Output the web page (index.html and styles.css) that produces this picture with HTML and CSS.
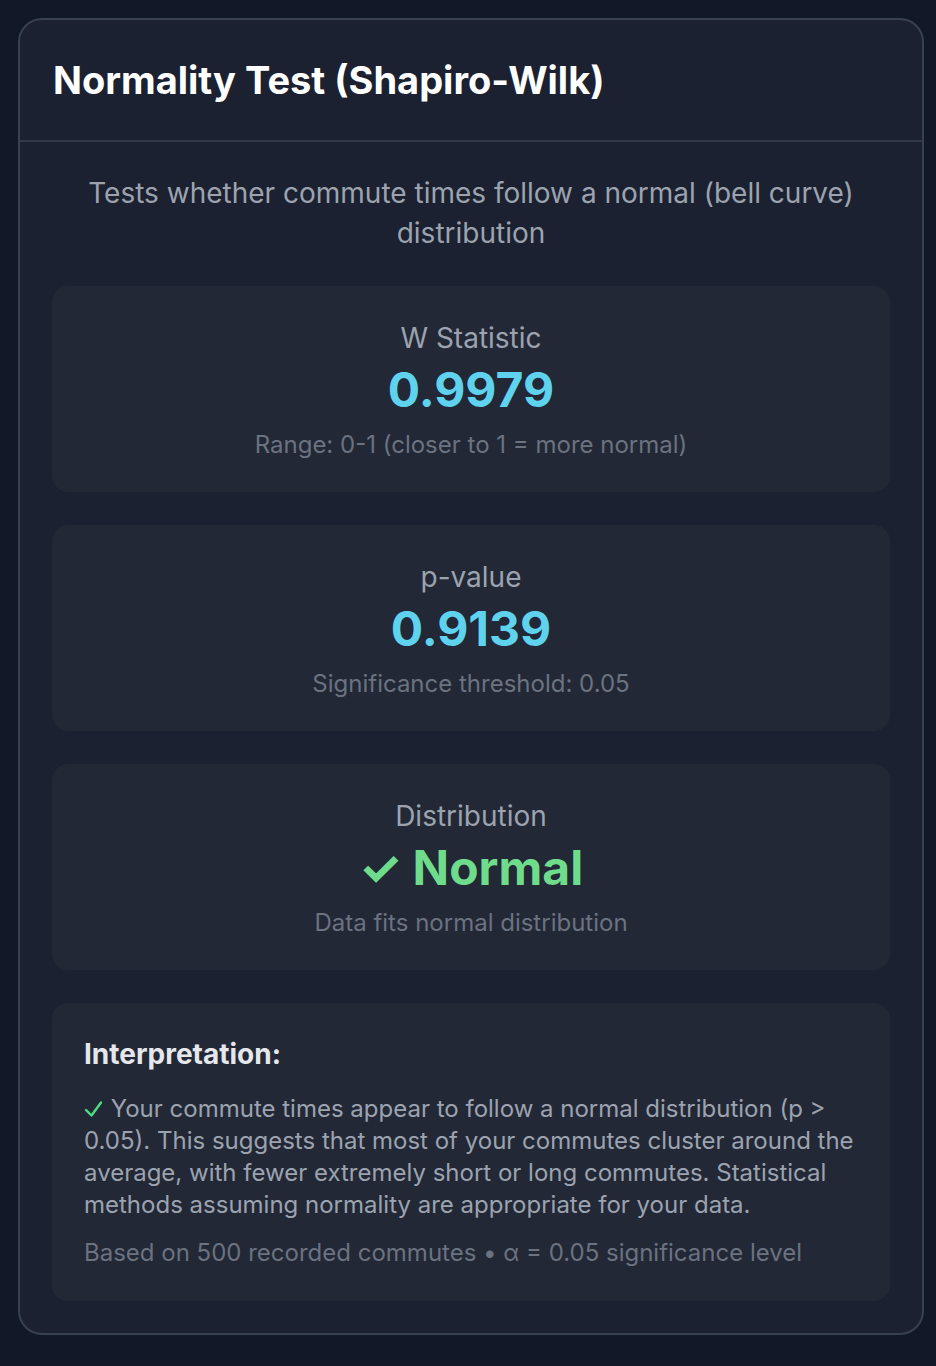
FILE: index.html
```html
<!DOCTYPE html>
<html lang="en">
<head>
<meta charset="utf-8">
<title>Normality Test</title>
<link rel="stylesheet" href="styles.css">
</head>
<body>
<div class="page">
  <section class="card">
    <header class="card-header">
      <h1 class="title">Normality Test (Shapiro-Wilk)</h1>
    </header>
    <div class="card-body">
      <p class="desc">Tests whether commute times follow a normal (bell curve) distribution</p>
      <div class="stat">
        <div class="stat-label">W Statistic</div>
        <div class="stat-value cyan">0.9979</div>
        <div class="stat-sub">Range: 0-1 (closer to 1 = more normal)</div>
      </div>
      <div class="stat">
        <div class="stat-label">p-value</div>
        <div class="stat-value cyan">0.9139</div>
        <div class="stat-sub">Significance threshold: 0.05</div>
      </div>
      <div class="stat">
        <div class="stat-label">Distribution</div>
        <div class="stat-value green">✓ Normal</div>
        <div class="stat-sub">Data fits normal distribution</div>
      </div>
      <div class="interp">
        <h2 class="interp-title">Interpretation:</h2>
        <p class="interp-text"><svg class="check" width="19" height="18" viewBox="0 0 19 18" aria-hidden="true"><path d="M2 10 L7.5 15.5 L17 2.5" fill="none" stroke="#4ade80" stroke-width="2.4" stroke-linecap="round" stroke-linejoin="round"/></svg> Your commute times appear to follow a normal distribution (p &gt; 0.05). This suggests that most of your commutes cluster around the average, with fewer extremely short or long commutes. Statistical methods assuming normality are appropriate for your data.</p>
        <p class="interp-foot">Based on 500 recorded commutes • α = 0.05 significance level</p>
      </div>
    </div>
  </section>
</div>
</body>
</html>
```

FILE: styles.css
```css
* { box-sizing: border-box; }
html, body { margin: 0; padding: 0; }
body {
  background: #111827;
  font-family: Inter, "Noto Sans", "Liberation Sans", sans-serif;
  color: #e5e7eb;
}
.page {
  padding: 18px 12px 30px 18px;
}
.card {
  width: 906px;
  background: #1b2130;
  border: 2px solid #394150;
  border-radius: 24px;
  overflow: hidden;
}
.card-header {
  padding: 32px 32px 32px 33px;
  border-bottom: 2px solid #323a48;
}
.title {
  margin: 0;
  font-size: 38px;
  line-height: 56px;
  font-weight: 700;
  color: #ffffff;
}
.card-body {
  padding: 31px 32px 32px 32px;
  display: flex;
  flex-direction: column;
  gap: 33px;
}
.desc {
  margin: 0;
  text-align: center;
  font-size: 28px;
  line-height: 40px;
  color: #9ca3af;
}
.stat {
  background: #222836;
  border-radius: 16px;
  padding: 32px;
  text-align: center;
}
.stat-label {
  font-size: 28px;
  line-height: 40px;
  color: #9ca3af;
}
.stat-value {
  font-size: 48px;
  line-height: 58px;
  font-weight: 700;
  margin: 3px 0 10px 0;
}
.cyan { color: #5fd3ee; }
.green { color: #6edc8a; }
.stat-sub {
  font-size: 24px;
  line-height: 31px;
  color: #6b7280;
}
.interp {
  background: #222836;
  border-radius: 16px;
  padding: 33px 32px 32px 32px;
}
.interp-title {
  margin: 0 0 21px 0;
  font-size: 28px;
  line-height: 36px;
  font-weight: 700;
  color: #e5e7eb;
}
.interp-text {
  margin: 0;
  font-size: 24px;
  line-height: 32px;
  color: #9ca3af;
}
.check {
  display: inline-block;
  vertical-align: -1px;
  margin-right: 1px;
}
.interp-foot {
  margin: 15px 0 0 0;
  font-size: 24px;
  line-height: 33px;
  color: #6b7280;
}
```
